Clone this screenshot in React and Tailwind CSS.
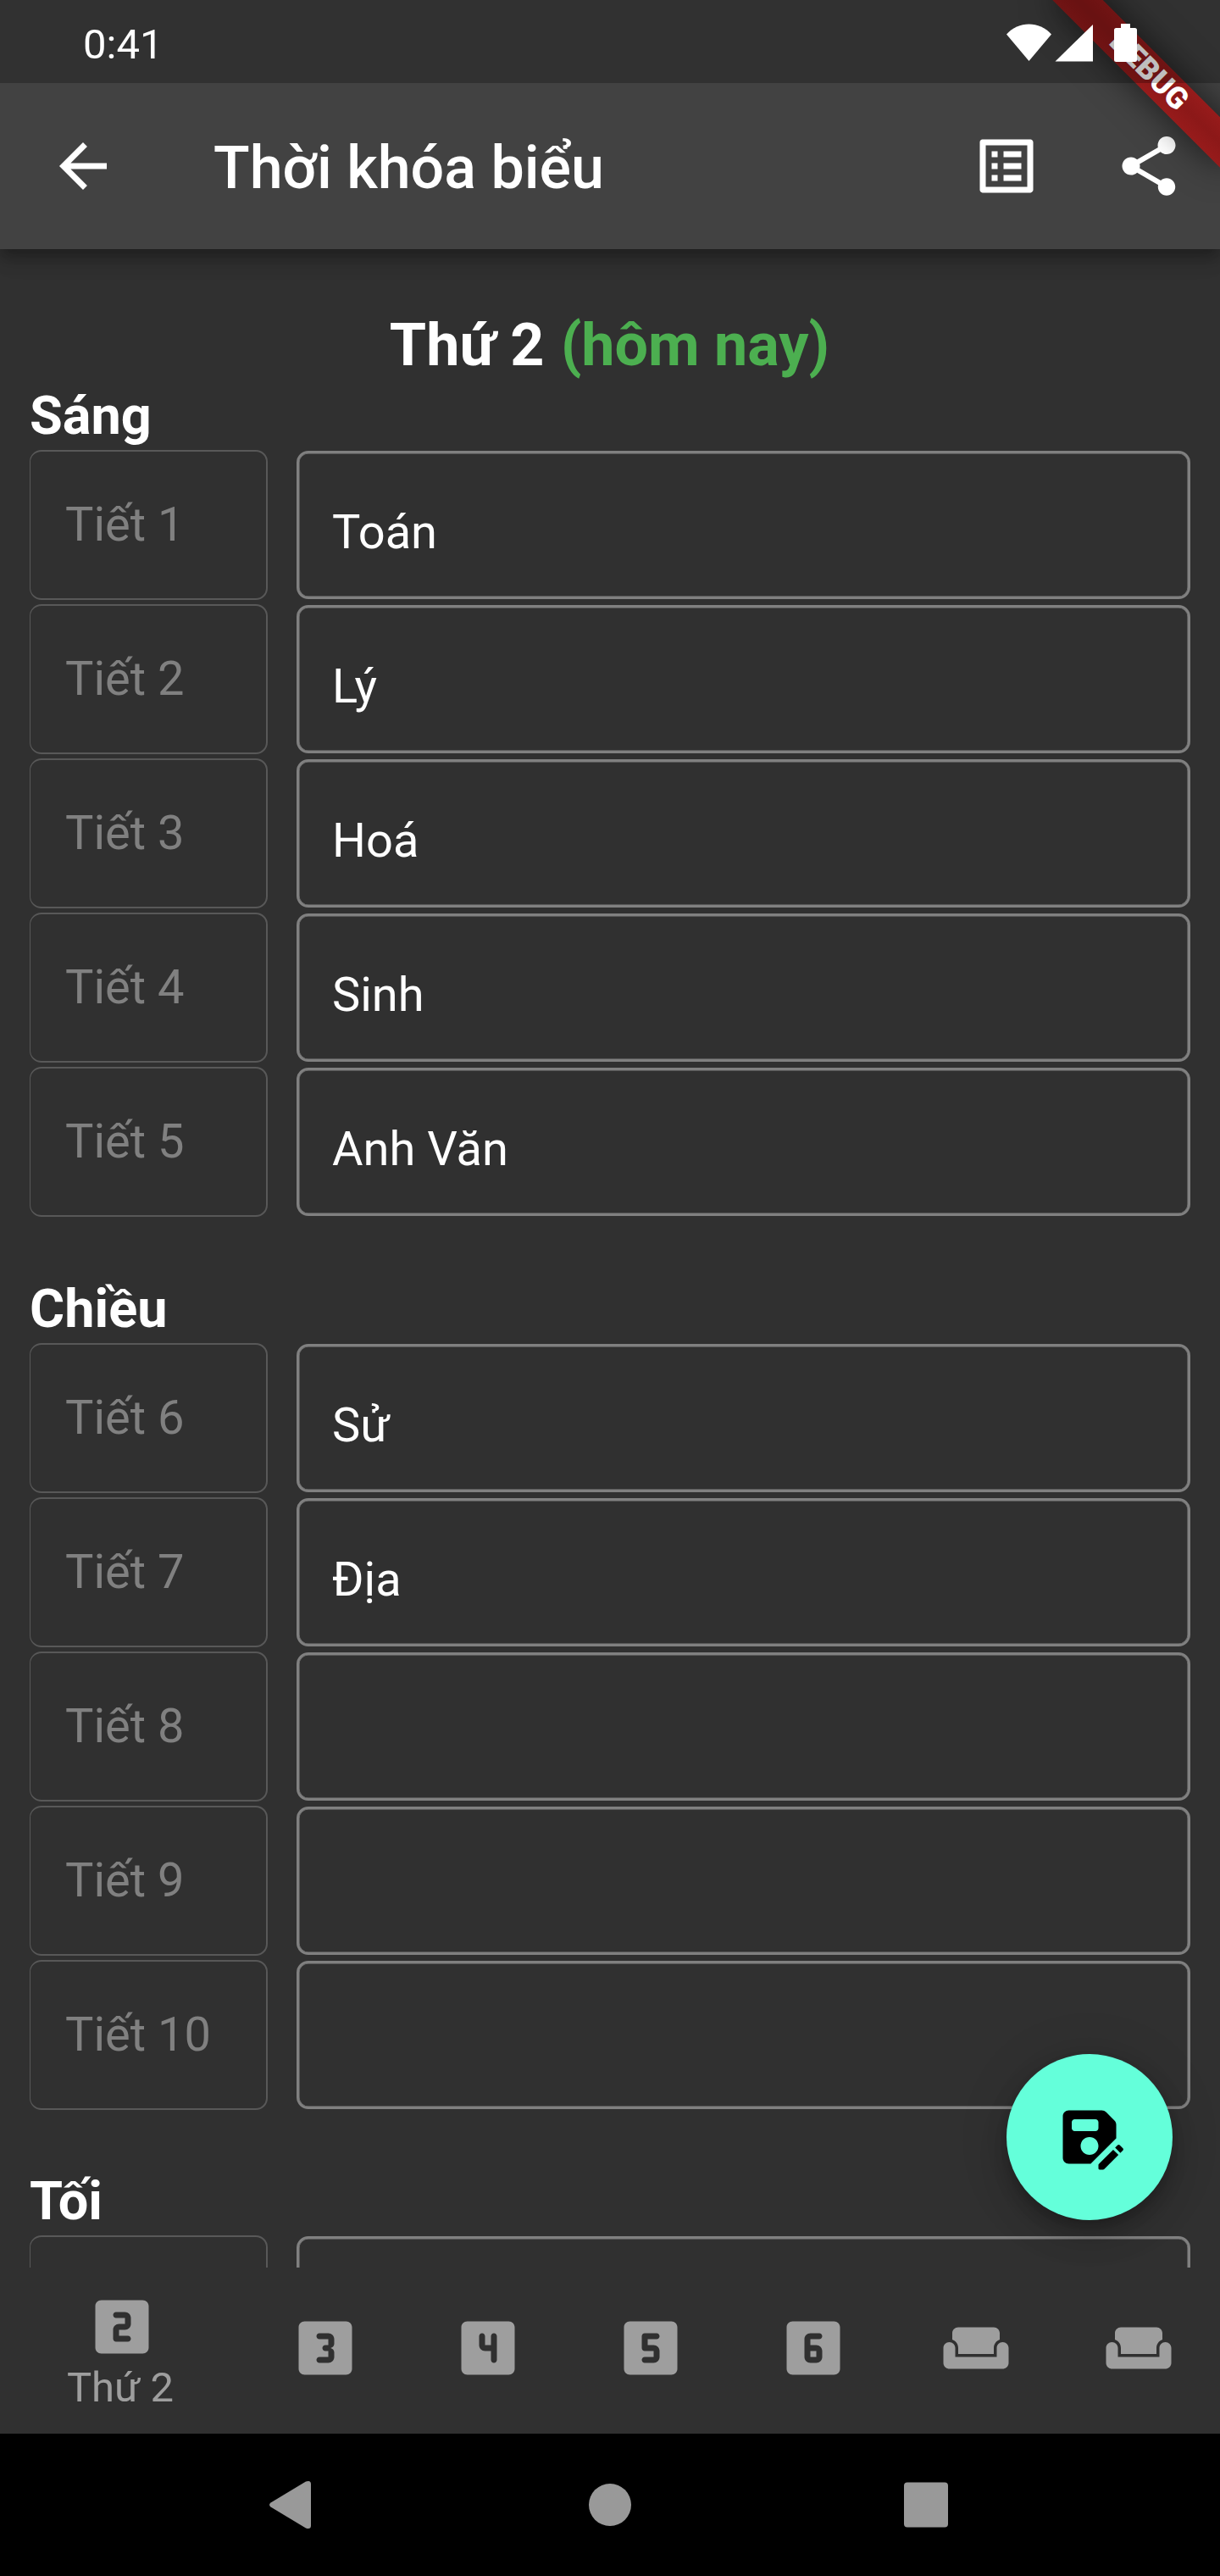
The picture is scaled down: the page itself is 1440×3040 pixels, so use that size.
const LOOKS_FRAME =
  "M19 3H5c-1.1 0-2 .9-2 2v14c0 1.1.9 2 2 2h14c1.1 0 2-.9 2-2V5c0-1.1-.9-2-2-2z";

const ICONS = {
  back: "M20 11H7.83l5.59-5.59L12 4l-8 8 8 8 1.41-1.41L7.83 13H20v-2z",
  list: "M19 5v14H5V5h14m1.1-2H3.9c-.5 0-.9.4-.9.9v16.2c0 .4.4.9.9.9h16.2c.4 0 .9-.5.9-.9V3.9c0-.5-.5-.9-.9-.9zM11 7h6v2h-6V7zm0 4h6v2h-6v-2zm0 4h6v2h-6v-2zM7 7h2v2H7V7zm0 4h2v2H7v-2zm0 4h2v2H7v-2z",
  share:
    "M18 16.08c-.76 0-1.44.3-1.96.77L8.91 12.7c.05-.23.09-.46.09-.7s-.04-.47-.09-.7l7.05-4.11c.54.5 1.25.81 2.04.81 1.66 0 3-1.34 3-3s-1.34-3-3-3-3 1.34-3 3c0 .24.04.47.09.7L8.04 9.81C7.5 9.31 6.79 9 6 9c-1.66 0-3 1.34-3 3s1.34 3 3 3c.79 0 1.5-.31 2.04-.81l7.12 4.16c-.05.21-.08.43-.08.65 0 1.61 1.31 2.92 2.92 2.92s2.92-1.31 2.92-2.92-1.31-2.92-2.92-2.92z",
  two: LOOKS_FRAME + "M15 11c0 1.11-.9 2-2 2h-2v2h3c.55 0 1 .45 1 1s-.45 1-1 1h-4c-.55 0-1-.45-1-1v-3c0-1.11.9-2 2-2h2V9h-3c-.55 0-1-.45-1-1s.45-1 1-1h3c1.1 0 2 .89 2 2v2z",
  three: LOOKS_FRAME + "M15 10.5c0 .83-.67 1.5-1.5 1.5.83 0 1.5.67 1.5 1.5V15c0 1.11-.9 2-2 2h-3c-.55 0-1-.45-1-1s.45-1 1-1h3v-2h-1c-.55 0-1-.45-1-1s.45-1 1-1h1V9h-3c-.55 0-1-.45-1-1s.45-1 1-1h3c1.1 0 2 .89 2 2v1.5z",
  four: LOOKS_FRAME + "M14 17c-.55 0-1-.45-1-1v-3h-2c-1.1 0-2-.9-2-2V8c0-.55.45-1 1-1s1 .45 1 1v3h2V8c0-.55.45-1 1-1s1 .45 1 1v8c0 .55-.45 1-1 1z",
  five: LOOKS_FRAME + "M14 9h-3v2h2c1.1 0 2 .89 2 2v2c0 1.11-.9 2-2 2h-3c-.55 0-1-.45-1-1s.45-1 1-1h3v-2h-3c-.55 0-1-.45-1-1V8c0-.55.45-1 1-1h4c.55 0 1 .45 1 1s-.45 1-1 1z",
  six: LOOKS_FRAME + "M14 9h-3v2h2c1.1 0 2 .89 2 2v2c0 1.11-.9 2-2 2h-2c-1.1 0-2-.89-2-2V9c0-1.11.9-2 2-2h3c.55 0 1 .45 1 1s-.45 1-1 1zM11 15h2v-2h-2v2z",
  sofa: "M21 10c-1.1 0-2 .9-2 2v3H5v-3c0-1.1-.9-2-2-2s-2 .9-2 2v5c0 1.1.9 2 2 2h18c1.1 0 2-.9 2-2v-5c0-1.1-.9-2-2-2zm-3-5H6c-1.1 0-2 .9-2 2v2.15c1.16.41 2 1.51 2 2.82V14h12v-2.03c0-1.3.84-2.4 2-2.82V7c0-1.1-.9-2-2-2z",
  saveAs:
    "M21 12.4V7.83c0-.53-.21-1.04-.59-1.41l-2.83-2.83C17.21 3.21 16.7 3 16.17 3H5c-1.1 0-2 .9-2 2v14c0 1.1.9 2 2 2h7.4L21 12.4zM12 18c-1.66 0-3-1.34-3-3s1.34-3 3-3 3 1.34 3 3-1.34 3-3 3zM14 10H7c-.55 0-1-.45-1-1V7c0-.55.45-1 1-1h7c.55 0 1 .45 1 1v2c0 .55-.45 1-1 1zM19.99 16.25l1.77 1.77-4.84 4.84c-.1.09-.23.14-.36.14H15.4c-.22 0-.4-.18-.4-.4v-1.15c0-.13.05-.26.15-.35l4.84-4.85zM23.25 16.51l-.85.85-1.77-1.77.85-.85c.2-.2.51-.2.71 0l1.06 1.06c.2.2.2.52 0 .71z",
};

function Icon({ name, className = "" }) {
  return (
    <svg viewBox="0 0 24 24" className={"size-[84px] shrink-0 fill-current " + className} fillRule="evenodd">
      <path d={ICONS[name]} />
    </svg>
  );
}

const SECTIONS = [
  {
    title: "Sáng",
    periods: [
      ["Tiết 1", "Toán"],
      ["Tiết 2", "Lý"],
      ["Tiết 3", "Hoá"],
      ["Tiết 4", "Sinh"],
      ["Tiết 5", "Anh Văn"],
    ],
  },
  {
    title: "Chiều",
    periods: [
      ["Tiết 6", "Sử"],
      ["Tiết 7", "Địa"],
      ["Tiết 8", ""],
      ["Tiết 9", ""],
      ["Tiết 10", ""],
    ],
  },
  { title: "Tối", periods: [["", ""]] },
];

const DAYS = ["three", "four", "five", "six", "sofa", "sofa"];

function Period({ label, subject }) {
  return (
    <div className="flex h-[182px] gap-[34px]">
      <div className="-mt-px h-[177px] w-[281px] rounded-[14px] border-2 border-l border-[#585858] pt-[44px] pl-[41px] text-[56px] leading-[84px] text-[#808080]">
        {label}
      </div>
      <div className="h-[175px] w-[1055px] rounded-[14px] border-3 border-[#808080] pt-[60px] pl-[39px] text-[56px] leading-[66px] shadow-[inset_0_0_0_0.5px_#808080]">
        {subject}
      </div>
    </div>
  );
}

function Section({ title, periods }) {
  return (
    <section className="h-[1053.5px] shrink-0">
      <h2 className="h-[77px] text-[63px] leading-[71px] font-bold">{title}</h2>
      {periods.map(([label, subject], i) => (
        <Period key={i} label={label} subject={subject} />
      ))}
    </section>
  );
}

function DebugBanner() {
  return (
    <div className="pointer-events-none absolute top-0 right-0 size-[294px] overflow-hidden">
      <div className="absolute top-[63px] left-[70px] flex h-[42px] w-[280px] rotate-45 items-center justify-center bg-linear-to-b from-[#971b1b] via-[#8c1818] to-[#971b1b] text-[35.7px] leading-none font-black shadow-[0_0_42px_rgba(0,0,0,0.6)]">
        DEBUG
      </div>
    </div>
  );
}

function StatusBar() {
  return (
    <div className="absolute inset-x-0 top-0 flex h-[98px] justify-between bg-black/25">
      <span className="pt-[24px] pl-[98px] text-[49px] leading-[58px]">0:41</span>
      <svg viewBox="0 0 180 98" className="mr-[80px] h-[98px] w-[180px] fill-white">
        <path d="M8 40.500C22 24.500 47 24.500 61 40.500L34.500 72z" />
        <path d="M65.500 72.500H110V29z" />
        <path d="M143 28h11v5h5.500q2.500 0 2.500 2.500v35q0 2.500-2.500 2.500h-22q-2.500 0-2.500-2.500v-35q0-2.500 2.500-2.500h5.500z" />
      </svg>
    </div>
  );
}

export default function App() {
  return (
    <div className="relative flex h-[3040px] w-[1440px] flex-col overflow-hidden bg-[#303030] font-[Roboto,sans-serif] text-white">
      <header className="relative z-10 flex h-[294px] shrink-0 items-center bg-[#424242] pt-[98px] shadow-[0_7px_14px_-3px_rgba(0,0,0,0.2),0_14px_17px_rgba(0,0,0,0.14),0_3px_35px_rgba(0,0,0,0.12)]">
        <Icon name="back" className="ml-[56px]" />
        <h1 className="ml-[112px] grow pt-[4px] text-[70px] leading-[82px] font-medium">Thời khóa biểu</h1>
        <Icon name="list" />
        <Icon name="share" className="mr-[42px] ml-[84px]" />
        <DebugBanner />
        <StatusBar />
      </header>

      <main className="relative flex h-[2382px] shrink-0 flex-col overflow-hidden pt-[72px] pl-[35px]">
        <p className="mb-[7px] pr-[36px] text-center text-[70px] leading-[82px] font-bold">
          Thứ 2 <span className="ml-[2px] text-[#4caf50]">(hôm nay)</span>
        </p>
        {SECTIONS.map((section) => (
          <Section key={section.title} {...section} />
        ))}
        <button className="absolute right-[56px] bottom-[56px] flex size-[196px] items-center justify-center rounded-full bg-[#64ffda] text-black shadow-[0_10px_17px_-3px_rgba(0,0,0,0.2),0_21px_35px_rgba(0,0,0,0.14),0_3px_63px_rgba(0,0,0,0.12)]">
          <Icon name="saveAs" />
        </button>
      </main>

      <nav className="flex h-[196px] shrink-0 text-[#9e9e9e]">
        <div className="flex w-[288px] flex-col items-center pt-[28px]">
          <Icon name="two" />
          <span className="pr-[4px] text-[49px] leading-[60px]">Thứ 2</span>
        </div>
        {DAYS.map((name, i) => (
          <div key={i} className="flex w-[192px] justify-center pt-[53px]">
            <Icon name={name} />
          </div>
        ))}
      </nav>

      <footer className="h-[168px] shrink-0 bg-black">
        <svg viewBox="0 0 1440 168" className="h-[168px] w-[1440px] fill-[#999999]">
          <path d="M319.500 81.500Q316.500 84 319.500 86.500L361 111.500Q367 113.500 367 108.500V59.500Q367 54.500 361 56.500z" />
          <circle cx="720" cy="84" r="25" />
          <rect x="1067" y="57.500" width="52" height="53" rx="4" />
        </svg>
      </footer>
    </div>
  );
}
